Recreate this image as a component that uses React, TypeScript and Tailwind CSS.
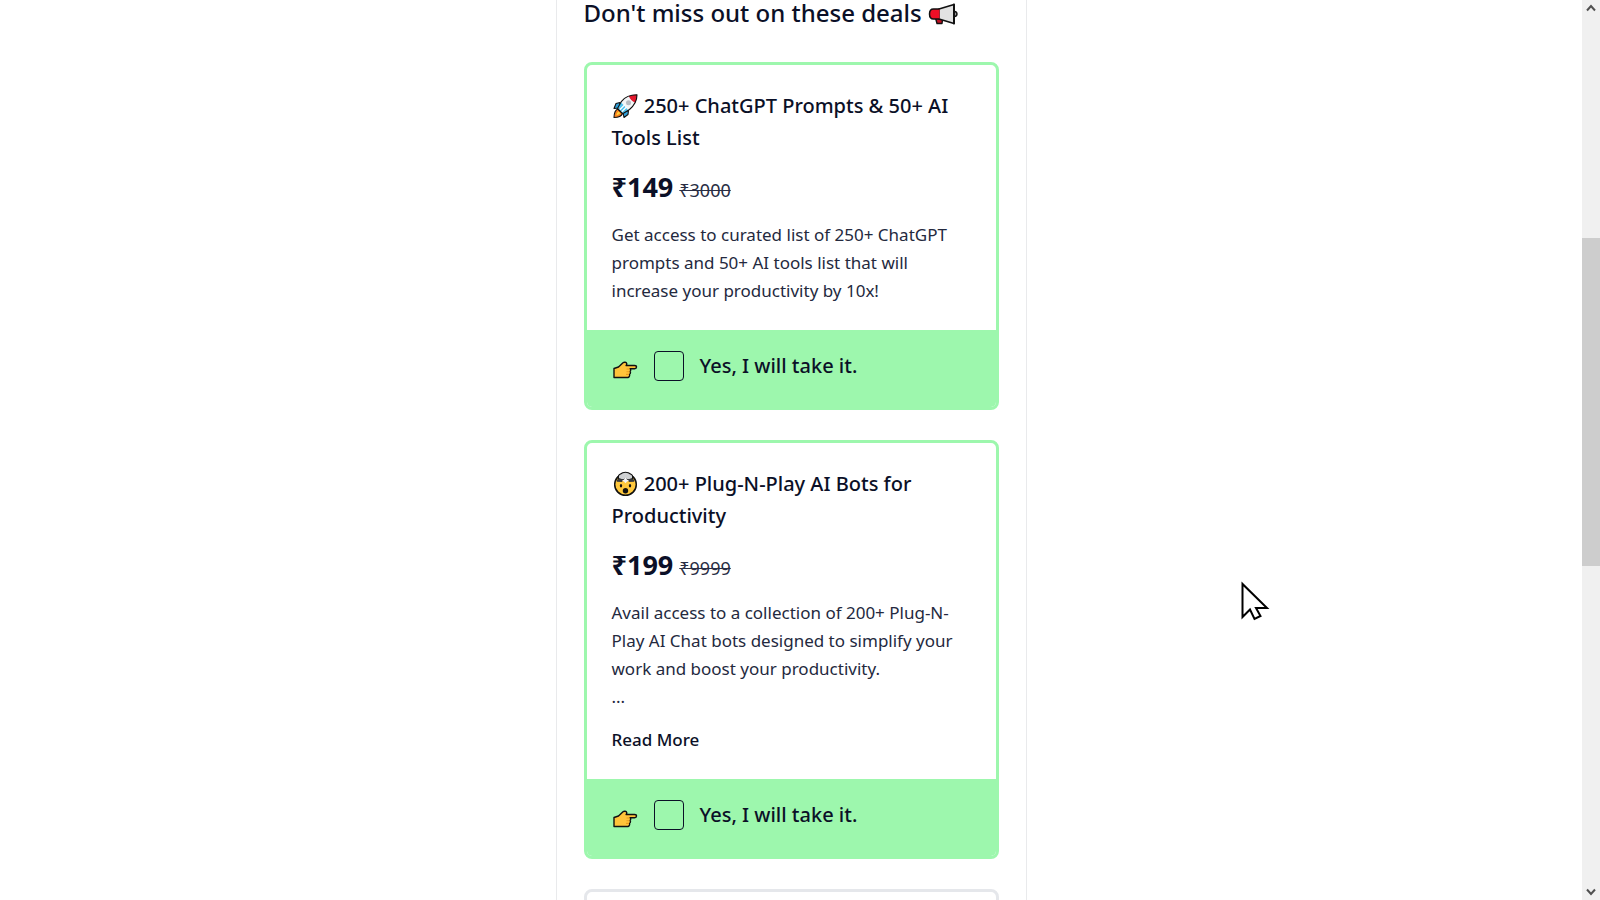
import { useId } from 'react';
import type { ReactNode } from 'react';

const INK = '#111';

function Megaphone() {
  return (
    <svg aria-hidden="true" viewBox="0 0 30 22" className="h-[22px] w-[30px] shrink-0">
      <path d="M7 13h8l-1 7.500h-5z" fill="#c01022" stroke={INK} strokeWidth="1.400" strokeLinejoin="round" />
      <path d="M11 6 26 1.500v19L11 16z" fill="#e2e2e2" stroke={INK} strokeWidth="1.500" strokeLinejoin="round" />
      <path d="M11.500 6H5.500C3 6 1.500 8 1.500 11S3 16 5.500 16h6z" fill="#ee0f26" />
      <path d="M11.500 6H5.500C3 6 1.500 8 1.500 11S3 16 5.500 16h6" fill="none" stroke={INK} strokeWidth="1.500" />
      <path d="M26.500 8.500c2 .2 2.500 1.200 2.500 2.500s-.5 2.300-2.500 2.500" fill="#999" stroke={INK} strokeWidth="1.400" />
      <path d="M26 1.500v19" stroke={INK} strokeWidth="2" strokeLinecap="round" />
    </svg>
  );
}

function Rocket() {
  return (
    <svg aria-hidden="true" viewBox="0 0 26 26" className="mr-px inline-block h-[26px] w-[26px] align-[-6px]">
      <path d="M8 9.500 4 10.500 2 15.500l5-.5zM16.500 17.500l-.5 4-4 3-1-5z" fill="#2f9fd8" stroke={INK} strokeWidth="1.100" strokeLinejoin="round" />
      <path d="M5.800 16c-2.300 1-3.700 4-3.800 8.500 4 0 7.500-1.300 8.500-4z" fill="#f7801e" stroke={INK} strokeWidth="1.100" strokeLinejoin="round" />
      <path d="M6.500 18.500c-1.200.8-2 2.500-2.200 3.800 1.500 0 3-.9 3.900-2.200z" fill="#ffd23c" />
      <path d="M25 1.800C18 1.700 13.500 3.500 9.500 8.300L5.500 15.500l5.200 5.200 6.800-4.200C22.300 12.500 25 8 25 1.800z" fill="#f3f5f7" />
      <path d="M9 9.300 5.500 15.500l5.200 5.200 5.500-3.500z" fill="#4fc3ee" />
      <path d="m7.500 17 5.500-5.500M9.500 19l5-5" stroke="#fff" strokeWidth="1.200" />
      <path d="M25 1.800c-3 0-6 .4-8.200 1.300 1.200 3.200 3.200 5.400 6.500 6.700 1.100-2.400 1.700-5.200 1.700-8z" fill="#e3182d" />
      <circle cx="16.500" cy="9.800" r="2.500" fill="#b7bcc2" />
      <path d="M25 1.800C18 1.700 13.500 3.500 9.500 8.300L5.500 15.500l5.200 5.200 6.800-4.200C22.300 12.500 25 8 25 1.800z" fill="none" stroke={INK} strokeWidth="1.100" strokeLinejoin="round" />
    </svg>
  );
}

function MindBlown() {
  return (
    <svg aria-hidden="true" viewBox="0 0 26 26" className="mr-px inline-block h-[26px] w-[26px] align-[-6px]">
      <circle cx="13.500" cy="13.500" r="10.800" fill="#ffc83d" stroke={INK} strokeWidth="1.500" />
      <path d="M6.500 7.500C6 5 7 3.500 8.500 3 10 1.600 12 1.200 13.500 1.200s3.500.4 5 1.800c1.500.5 2.500 2 2 4.500L17 9l-3.500-1L10 9z" fill="#cfd1d3" stroke={INK} strokeWidth="1.100" strokeLinejoin="round" />
      <path d="M4.500 9c2-1.500 5-1.500 7.300-.3l-2 2.300-5-.2zM22.500 9c-2-1.500-5-1.500-7.300-.3l2 2.300 5-.2z" fill="#37393c" />
      <path d="M13.500 6.500 15 8.500l2 1.300-2 .7-1.500 1.800-1.500-1.800-2-.7 2-1.300z" fill="#f5f5f5" />
      <ellipse cx="9" cy="14.800" rx="1.200" ry="1.800" fill={INK} />
      <ellipse cx="18" cy="14.800" rx="1.200" ry="1.800" fill={INK} />
      <circle cx="13.500" cy="19.800" r="2.700" fill={INK} />
    </svg>
  );
}

function PointingHand() {
  return (
    <svg aria-hidden="true" viewBox="0 0 26 20" className="mt-2 h-5 w-[26px] shrink-0">
      <path
        d="M2 8.500 6.500 7l4.500-4.200c1.200-1 3.300-.6 3.700.6.200.8 0 1.500-.6 2.100h8.500c1.200 0 1.900.7 1.900 1.600s-.7 1.600-1.900 1.600h-4.600c.8.500 1 2.200 0 2.900.7.700.7 2.200-.4 2.700.3 1-.3 2.800-1.600 3.200H2z"
        fill="#ffc43a"
        stroke={INK}
        strokeWidth="1.400"
        strokeLinejoin="round"
      />
      <path d="M14.500 9h3M14.500 11.700h3M14 14.400h3" stroke="#ea9a1c" strokeWidth="1.100" />
    </svg>
  );
}

function Pointer() {
  return (
    <svg aria-hidden="true" viewBox="0 0 30 42" className="pointer-events-none absolute left-[1240px] top-[580px] h-[42px] w-[30px]">
      <path d="M2.500 4v33l7.500-7.500 4.500 9.500 6-3-4.500-8H27z" fill="#fff" stroke="#000" strokeWidth="2" />
    </svg>
  );
}

type DealProps = { icon: ReactNode; title: string; price: string; oldPrice: string; children: ReactNode; more?: boolean };

function Deal({ icon, title, price, oldPrice, children, more }: DealProps) {
  const id = useId();
  return (
    <article className="overflow-hidden rounded-lg border-[3px] border-[#9df7ad]">
      <div className="p-[25px]">
        <h3 className="text-[20px] leading-8 font-medium">
          {icon} {title}
        </h3>
        <p className="mt-3.5 flex h-10 items-baseline gap-1.5 leading-[38px]">
          <span className="text-[27px] font-bold">{price}</span>
          <s className="text-[18px] text-[#2a2e44]">{oldPrice}</s>
        </p>
        <p className="mt-[13px] text-[17px] leading-7 text-[#24293e]">{children}</p>
        {more && (
          <button type="button" className="mt-[15px] block text-[17px] leading-7 font-medium">
            Read More
          </button>
        )}
      </div>
      <div className="flex items-center gap-4 bg-[#9df7ad] px-[25px] pt-[21px] pb-[26px]">
        <PointingHand />
        <input id={id} type="checkbox" className="size-[30px] shrink-0 appearance-none rounded border border-[#0b1027] checked:bg-[#0b1027]" />
        <label htmlFor={id} className="text-[20px] leading-[30px] font-medium">
          Yes, I will take it.
        </label>
      </div>
    </article>
  );
}

function Chevron({ d }: { d: string }) {
  return (
    <svg aria-hidden="true" viewBox="0 0 18 18" className="size-[18px]">
      <path d={d} fill="none" stroke="#505050" strokeWidth="2" />
    </svg>
  );
}

export default function App() {
  return (
    <div className="relative flex h-screen overflow-hidden bg-white font-['Noto_Sans',sans-serif] text-[#0b1027]">
      <main className="flex min-w-0 flex-1 justify-center">
        <section className="flex h-max min-h-full w-full max-w-[471px] flex-col gap-[30px] border-x border-[#e9eaec] px-[27px]">
          <h2 className="flex h-8 items-start gap-1.5 text-[24px] leading-[26px] font-medium">
            <span>Don't miss out on these deals</span>
            <span className="pt-[3px]">
              <Megaphone />
            </span>
          </h2>
          <Deal icon={<Rocket />} title="250+ ChatGPT Prompts & 50+ AI Tools List" price="₹149" oldPrice="₹3000">
            Get access to curated list of 250+ ChatGPT prompts and 50+ AI tools list that will increase your productivity by 10x!
          </Deal>
          <Deal icon={<MindBlown />} title="200+ Plug-N-Play AI Bots for Productivity" price="₹199" oldPrice="₹9999" more>
            Avail access to a collection of 200+ Plug-N-Play AI Chat bots designed to simplify your work and boost your productivity.
            <br />
            ...
          </Deal>
          <div className="h-20 rounded-lg border-[3px] border-[#e5e7eb]" />
        </section>
      </main>
      <div aria-hidden="true" className="flex w-[18px] shrink-0 flex-col bg-[#f0f0f0]">
        <Chevron d="M5 10.500 9 6l4 4.500" />
        <div className="flex flex-1 flex-col">
          <div className="grow-[220]" />
          <div className="grow-[328] bg-[#cdcdcd]" />
          <div className="grow-[316]" />
        </div>
        <Chevron d="M5 7.500 9 12l4-4.500" />
      </div>
      <Pointer />
    </div>
  );
}
